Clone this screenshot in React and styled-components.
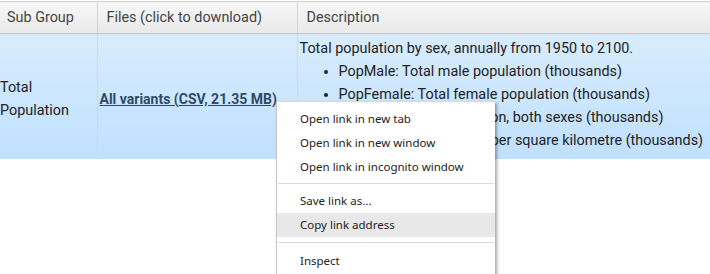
import React from "react";
import styled, { createGlobalStyle } from "styled-components";

const GlobalStyle = createGlobalStyle`
  html, body {
    margin: 0;
    padding: 0;
    background: #fff;
  }
  body {
    font-family: Roboto, "Liberation Sans", sans-serif;
  }
`;

const Page = styled.div`
  position: relative;
  width: 710px;
  height: 274px;
  overflow: hidden;
  padding-top: 1px;
  box-sizing: border-box;
`;

const Table = styled.table`
  width: 740px;
  border-collapse: collapse;
  table-layout: fixed;
  font-size: 14.4px;
  color: #222;
`;

const HeadCell = styled.th`
  height: 32px;
  padding: 0 0 0 ${(p) => (p.first ? 7 : 9)}px;
  text-align: left;
  font-weight: 400;
  color: #444;
  background: linear-gradient(#f7f7f7, #e9e9e9);
  border-top: 1px solid #d6d6d6;
  border-bottom: 1px solid #c8c8c8;
  border-left: ${(p) => (p.first ? "none" : "1px solid #d4d4d4")};
  box-sizing: border-box;
`;

const Cell = styled.td`
  height: 125px;
  padding: ${(p) => (p.top ? "2px 0 0" : "6px 0 0")};
  padding-left: ${(p) => (p.first ? 0 : 2)}px;
  vertical-align: ${(p) => (p.top ? "top" : "middle")};
  background: linear-gradient(#d8ecfd, #bfe0fe);
  border-left: ${(p) => (p.first ? "none" : "1px solid #dcd6cc")};
  line-height: 23px;
  box-sizing: border-box;
`;

const FileLink = styled.a`
  color: #2f4a66;
  font-size: 14px;
  font-weight: 700;
  text-decoration: underline;
  cursor: pointer;
`;

const Intro = styled.div`
  padding-top: 1px;
`;

const Bullets = styled.ul`
  margin: 0;
  padding-left: 39px;
  list-style: disc;
`;

const Menu = styled.div`
  position: absolute;
  left: 276px;
  top: 101px;
  width: 218px;
  padding: 5px 0;
  background: #fff;
  border-left: 1px solid #c4c4c4;
  border-top: 1px solid #d8d8d8;
  box-shadow: 2px 2px 3px rgba(0, 0, 0, 0.35);
  font-family: "Noto Sans", "Open Sans", sans-serif;
  font-size: 11.5px;
  color: #222;
`;

const MenuItem = styled.div`
  height: 24px;
  line-height: 24px;
  padding-left: 23px;
  background: ${(p) => (p.active ? "#e8e8e8" : "transparent")};
`;

const Divider = styled.div`
  height: 1px;
  margin: ${(p) => (p.last ? "5px 1px 6px" : "4px 1px 5px")};
  background: #dadada;
`;

const bullets = [
  "PopMale: Total male population (thousands)",
  "PopFemale: Total female population (thousands)",
  "PopTotal: Total population, both sexes (thousands)",
  "PopDensity: Population per square kilometre (thousands)",
];

export default function App() {
  return (
    <>
      <GlobalStyle />
      <Page>
        <Table>
          <colgroup>
            <col style={{ width: 97 }} />
            <col style={{ width: 200 }} />
            <col />
          </colgroup>
          <thead>
            <tr>
              <HeadCell first>Sub Group</HeadCell>
              <HeadCell>Files (click to download)</HeadCell>
              <HeadCell>Description</HeadCell>
            </tr>
          </thead>
          <tbody>
            <tr>
              <Cell first>
                Total
                <br />
                Population
              </Cell>
              <Cell>
                <FileLink>All variants (CSV, 21.35 MB)</FileLink>
              </Cell>
              <Cell top>
                <Intro>Total population by sex, annually from 1950 to 2100.</Intro>
                <Bullets>
                  {bullets.map((b) => (
                    <li key={b}>{b}</li>
                  ))}
                </Bullets>
              </Cell>
            </tr>
          </tbody>
        </Table>
        <Menu>
          <MenuItem>Open link in new tab</MenuItem>
          <MenuItem>Open link in new window</MenuItem>
          <MenuItem>Open link in incognito window</MenuItem>
          <Divider />
          <MenuItem>Save link as...</MenuItem>
          <MenuItem active>Copy link address</MenuItem>
          <Divider last />
          <MenuItem>Inspect</MenuItem>
        </Menu>
      </Page>
    </>
  );
}
